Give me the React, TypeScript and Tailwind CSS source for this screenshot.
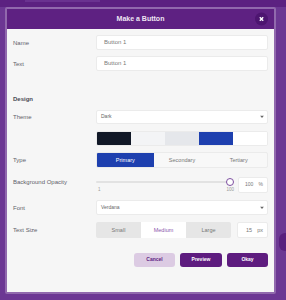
import React from "react";

const swatches = ["#111827", "#f3f4f6", "#e5e7eb", "#1e40af", "#ffffff"];

function Label({ children }: { children: React.ReactNode }) {
  return <div className="w-[83px] shrink-0 text-[6px] leading-none text-[#5f5f6b]">{children}</div>;
}

function Caret() {
  return (
    <svg width="4" height="3" viewBox="0 0 4 3" className="absolute right-[3px] top-1/2 -translate-y-1/2">
      <path d="M0 0 L4 0 L2 2.5 Z" fill="#666" />
    </svg>
  );
}

export default function App() {
  return (
    <div
      className="relative h-[300px] w-[286px] overflow-hidden bg-[#6c3793]"
      style={{ fontFamily: '"Liberation Sans", Arial, sans-serif' }}
    >
      <div className="flex h-[7px] w-full bg-[#5c2181]">
        <div className="ml-[25px] h-[2px] w-[75px] bg-[#6a3290]" />
      </div>
      <div className="absolute right-[-5px] top-[233px] h-[18px] w-[12px] rounded-full bg-[#5a1f7e]" />

      <div className="relative ml-[5px] flex h-[287px] w-[271px] flex-col overflow-hidden rounded-[2px] border-2 border-[#9169ad]">
        <div className="relative flex h-[20px] shrink-0 items-center justify-center bg-[#5e2182]">
          <span className="text-[7px] font-bold text-[#eee5f3]">Make a Button</span>
          <div className="absolute right-[6px] top-1/2 flex h-[13px] w-[13px] -translate-y-1/2 items-center justify-center rounded-full bg-[#4d1570]">
            <svg width="5" height="5" viewBox="0 0 5 5">
              <path d="M0.8 0.8 L4.2 4.2 M4.2 0.8 L0.8 4.2" stroke="#fff" strokeWidth="1.4" />
            </svg>
          </div>
        </div>

        <div className="flex flex-1 flex-col bg-[#f6f6f6] pl-[6px] pr-[6px]">
          <div className="mt-[6px] flex items-center">
            <Label>Name</Label>
            <div className="flex h-[15px] flex-1 items-center rounded-[2px] border border-[#ebebeb] bg-white pl-[7px] text-[6px] text-[#7a7a7a]">
              Button 1
            </div>
          </div>
          <div className="mt-[6px] flex items-center">
            <Label>Text</Label>
            <div className="flex h-[15px] flex-1 items-center rounded-[2px] border border-[#ebebeb] bg-white pl-[7px] text-[6px] text-[#7a7a7a]">
              Button 1
            </div>
          </div>

          <div className="mt-[25px] text-[6px] font-bold leading-none text-[#4a4a55]">Design</div>

          <div className="mt-[8px] flex items-center">
            <Label>Theme</Label>
            <div className="relative flex h-[14px] flex-1 items-center rounded-[2px] border border-[#ebebeb] bg-white pl-[4px] text-[5px] text-[#666]">
              Dark
              <Caret />
            </div>
          </div>

          <div className="mt-[7px] flex items-center">
            <Label>&nbsp;</Label>
            <div className="flex h-[15px] flex-1 overflow-hidden rounded-[2px] border border-[#ebebeb] bg-white">
              {swatches.map((c) => (
                <div key={c} className="flex-1" style={{ backgroundColor: c }} />
              ))}
            </div>
          </div>

          <div className="mt-[6px] flex items-center">
            <Label>Type</Label>
            <div className="flex h-[16px] flex-1 overflow-hidden rounded-[2px] border border-[#ebebeb] bg-[#f8f8f8] text-[5.5px]">
              <div className="flex flex-1 items-center justify-center bg-[#1e40af] text-white">Primary</div>
              <div className="flex flex-1 items-center justify-center text-[#777]">Secondary</div>
              <div className="flex flex-1 items-center justify-center text-[#777]">Tertiary</div>
            </div>
          </div>

          <div className="mt-[9px] flex items-start">
            <div className="mt-[2px]">
              <Label>Background Opacity</Label>
            </div>
            <div className="flex flex-1 items-start gap-[4px]">
              <div className="relative h-[16px] flex-1">
                <div className="absolute left-0 right-[4px] top-[4px] h-[2px] rounded-full bg-[#e2e2e2]" />
                <div className="absolute right-0 top-[1px] h-[8px] w-[8px] rounded-full border border-[#7d4ea0] bg-white" />
                <div className="absolute left-[2px] top-[11px] text-[4.5px] leading-none text-[#9a9a9a]">1</div>
                <div className="absolute right-0 top-[11px] text-[4.5px] leading-none text-[#9a9a9a]">100</div>
              </div>
              <div className="flex h-[16px] w-[30px] items-center justify-between rounded-[2px] border border-[#ebebeb] bg-white pl-[6px] pr-[4px] text-[5px] text-[#777]">
                <span>100</span>
                <span>%</span>
              </div>
            </div>
          </div>

          <div className="mt-[7px] flex items-center">
            <Label>Font</Label>
            <div className="relative flex h-[15px] flex-1 items-center rounded-[2px] border border-[#ebebeb] bg-white pl-[4px] text-[5px] text-[#666]">
              Verdana
              <Caret />
            </div>
          </div>

          <div className="mt-[7px] flex items-center">
            <Label>Text Size</Label>
            <div className="flex flex-1 items-center gap-[6px]">
              <div className="flex h-[16px] flex-1 overflow-hidden rounded-[2px] bg-[#e6e6e6] text-[5.5px]">
                <div className="flex flex-1 items-center justify-center text-[#777]">Small</div>
                <div className="flex flex-1 items-center justify-center bg-white text-[#8a55ad]">Medium</div>
                <div className="flex flex-1 items-center justify-center text-[#777]">Large</div>
              </div>
              <div className="flex h-[16px] w-[31px] items-center justify-between rounded-[2px] border border-[#ebebeb] bg-white pl-[8px] pr-[4px] text-[5.5px] text-[#777]">
                <span>15</span>
                <span>px</span>
              </div>
            </div>
          </div>

          <div className="mt-[15px] flex justify-end gap-[5px] text-[5px] font-bold">
            <button className="flex h-[14px] w-[41px] items-center justify-center rounded-[3px] bg-[#dccbe3] text-[#5e2182]">
              Cancel
            </button>
            <button className="flex h-[14px] w-[42px] items-center justify-center rounded-[3px] bg-[#5e1c7f] text-white">
              Preview
            </button>
            <button className="flex h-[14px] w-[41px] items-center justify-center rounded-[3px] bg-[#5e1c7f] text-white">
              Okay
            </button>
          </div>
        </div>
      </div>
    </div>
  );
}
